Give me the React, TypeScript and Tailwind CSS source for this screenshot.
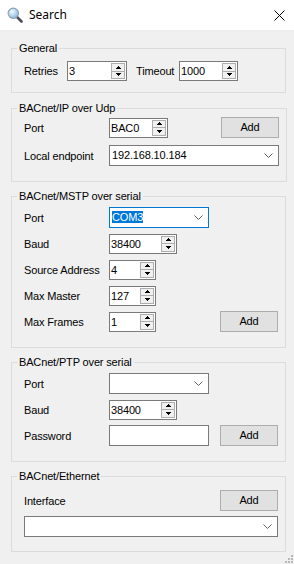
import React from "react";

const F = "font-['Liberation_Sans',Arial,sans-serif] text-[11px] tracking-[-0.15px] text-black";

function TriUp() {
  return (
    <svg width="5" height="3" viewBox="0 0 5 3" shapeRendering="crispEdges">
      <path d="M2 0h1v1h1v1h1v1H0V2h1V1h1z" fill="#000" />
    </svg>
  );
}
function TriDown() {
  return (
    <svg width="5" height="3" viewBox="0 0 5 3" shapeRendering="crispEdges">
      <path d="M0 0h5v1H4v1H3v1H2V2H1V1H0z" fill="#000" />
    </svg>
  );
}

function Spin({ value, w }: { value: string; w: string }) {
  return (
    <div className={`flex h-[20px] ${w} border border-[#7a7a7a] bg-white`}>
      <span className="flex-1 pl-[1px] leading-[18px]">{value}</span>
      <div className="flex w-[16px] flex-col p-[1px]">
        <div className="flex flex-1 items-center justify-center border border-[#adadad] bg-[#f0f0f0]">
          <TriUp />
        </div>
        <div className="flex flex-1 items-center justify-center border border-t-0 border-[#adadad] bg-[#f0f0f0]">
          <TriDown />
        </div>
      </div>
    </div>
  );
}

function Chevron() {
  return (
    <svg width="9" height="5" viewBox="0 0 9 5">
      <path d="M0.5 0.5 L4.5 4.5 L8.5 0.5" fill="none" stroke="#606060" strokeWidth="1" />
    </svg>
  );
}

function Combo({ value, w, focused }: { value?: string; w: string; focused?: boolean }) {
  return (
    <div
      className={`flex h-[21px] ${w} items-center border ${focused ? "border-[#0078d7]" : "border-[#7a7a7a]"} bg-white`}
    >
      <span className="flex-1 pl-[2px] leading-[19px]">
        {value ? (
          focused ? (
            <span className="bg-[#0078d7] text-white">{value}</span>
          ) : (
            value
          )
        ) : null}
      </span>
      <div className="flex w-[17px] items-center justify-center pr-[2px]">
        <Chevron />
      </div>
    </div>
  );
}

function Btn() {
  return (
    <div className="ml-auto flex h-[21px] w-[58px] items-center justify-center border border-[#adadad] bg-[#e1e1e1]">
      Add
    </div>
  );
}

function Label({ children }: { children: React.ReactNode }) {
  return <span className="w-[85px] shrink-0 leading-[14px]">{children}</span>;
}

function Group({
  title,
  className,
  children,
}: {
  title: string;
  className: string;
  children: React.ReactNode;
}) {
  return (
    <fieldset className={`border border-[#dcdcdc] ${className}`}>
      <legend className="ml-[5px] px-[2px] leading-[14px]">{title}</legend>
      {children}
    </fieldset>
  );
}

export default function App() {
  return (
    <div className={`relative h-[564px] w-[294px] overflow-hidden bg-[#f0f0f0] ${F}`}>
      {/* Title bar */}
      <div className="flex h-[30px] items-center bg-white">
        <div className="ml-[7px] mr-[6px] flex h-[16px] w-[16px] items-center justify-center">
          <svg width="16" height="16" viewBox="0 0 16 16">
            <defs>
              <radialGradient id="lens" cx="0.4" cy="0.35" r="0.7">
                <stop offset="0" stopColor="#f4fbff" />
                <stop offset="1" stopColor="#7fb3d9" />
              </radialGradient>
            </defs>
            <line x1="9.5" y1="9.5" x2="14.5" y2="14.5" stroke="#4b4f55" strokeWidth="2.6" strokeLinecap="round" />
            <circle cx="6.3" cy="6.3" r="5.2" fill="url(#lens)" stroke="#8c9fb0" strokeWidth="1.1" />
          </svg>
        </div>
        <span className="font-['Noto_Sans',sans-serif] text-[12px] tracking-normal text-black">Search</span>
        <div className="ml-auto mr-[8px] flex h-[14px] w-[14px] items-center justify-center">
          <svg width="11" height="11" viewBox="0 0 11 11">
            <path d="M0.5 0.5 L10.5 10.5 M10.5 0.5 L0.5 10.5" stroke="#000" strokeWidth="1" />
          </svg>
        </div>
      </div>

      <div className="flex flex-col pl-[11px] pr-[8px]">
        {/* General */}
        <Group title="General" className="mt-[11px]">
          <div className="flex items-center pl-[12px] pr-[7px] pt-[6px] pb-[11px]">
            <span className="w-[43px] shrink-0">Retries</span>
            <Spin value="3" w="w-[60px]" />
            <span className="ml-[9px] w-[43px] shrink-0">Timeout</span>
            <Spin value="1000" w="w-[59px]" />
          </div>
        </Group>

        {/* BACnet/IP */}
        <Group title="BACnet/IP over Udp" className="mt-[8px]">
          <div className="flex flex-col gap-[7px] pl-[12px] pr-[7px] pt-[2px] pb-[15px]">
            <div className="flex h-[21px] items-center">
              <Label>Port</Label>
              <Spin value="BAC0" w="w-[59px]" />
              <Btn />
            </div>
            <div className="flex items-center">
              <Label>Local endpoint</Label>
              <Combo value="192.168.10.184" w="w-[170px]" />
            </div>
          </div>
        </Group>

        {/* MSTP */}
        <Group title="BACnet/MSTP over serial" className="mt-[7px]">
          <div className="flex flex-col gap-[5px] pl-[12px] pr-[7px] pt-[4px] pb-[15px]">
            <div className="flex h-[21px] items-center">
              <Label>Port</Label>
              <Combo value="COM3" w="w-[100px]" focused />
            </div>
            <div className="flex h-[21px] items-center">
              <Label>Baud</Label>
              <Spin value="38400" w="w-[68px]" />
            </div>
            <div className="flex h-[21px] items-center">
              <Label>Source Address</Label>
              <Spin value="4" w="w-[47px]" />
            </div>
            <div className="flex h-[21px] items-center">
              <Label>Max Master</Label>
              <Spin value="127" w="w-[47px]" />
            </div>
            <div className="flex h-[21px] items-center">
              <Label>Max Frames</Label>
              <Spin value="1" w="w-[47px]" />
              <Btn />
            </div>
          </div>
        </Group>

        {/* PTP */}
        <Group title="BACnet/PTP over serial" className="mt-[7px]">
          <div className="flex flex-col gap-[5px] pl-[12px] pr-[7px] pt-[4px] pb-[15px]">
            <div className="flex h-[21px] items-center">
              <Label>Port</Label>
              <Combo w="w-[100px]" />
            </div>
            <div className="flex h-[21px] items-center">
              <Label>Baud</Label>
              <Spin value="38400" w="w-[68px]" />
            </div>
            <div className="flex h-[21px] items-center">
              <Label>Password</Label>
              <div className="h-[21px] w-[100px] border border-[#7a7a7a] bg-white" />
              <Btn />
            </div>
          </div>
        </Group>

        {/* Ethernet */}
        <Group title="BACnet/Ethernet" className="mt-[7px]">
          <div className="flex flex-col gap-[5px] pl-[12px] pr-[7px] pt-[7px] pb-[14px]">
            <div className="flex h-[21px] items-center">
              <Label>Interface</Label>
              <Btn />
            </div>
            <Combo w="w-full" />
          </div>
        </Group>
      </div>

      {/* resize grip */}
      <svg className="absolute bottom-0 right-0" width="11" height="11" viewBox="0 0 11 11" shapeRendering="crispEdges">
        <rect x="8" y="2" width="2" height="2" fill="#b8b8b8" />
        <rect x="5" y="5" width="2" height="2" fill="#b8b8b8" />
        <rect x="8" y="5" width="2" height="2" fill="#b8b8b8" />
        <rect x="2" y="8" width="2" height="2" fill="#b8b8b8" />
        <rect x="5" y="8" width="2" height="2" fill="#b8b8b8" />
        <rect x="8" y="8" width="2" height="2" fill="#b8b8b8" />
      </svg>
    </div>
  );
}
